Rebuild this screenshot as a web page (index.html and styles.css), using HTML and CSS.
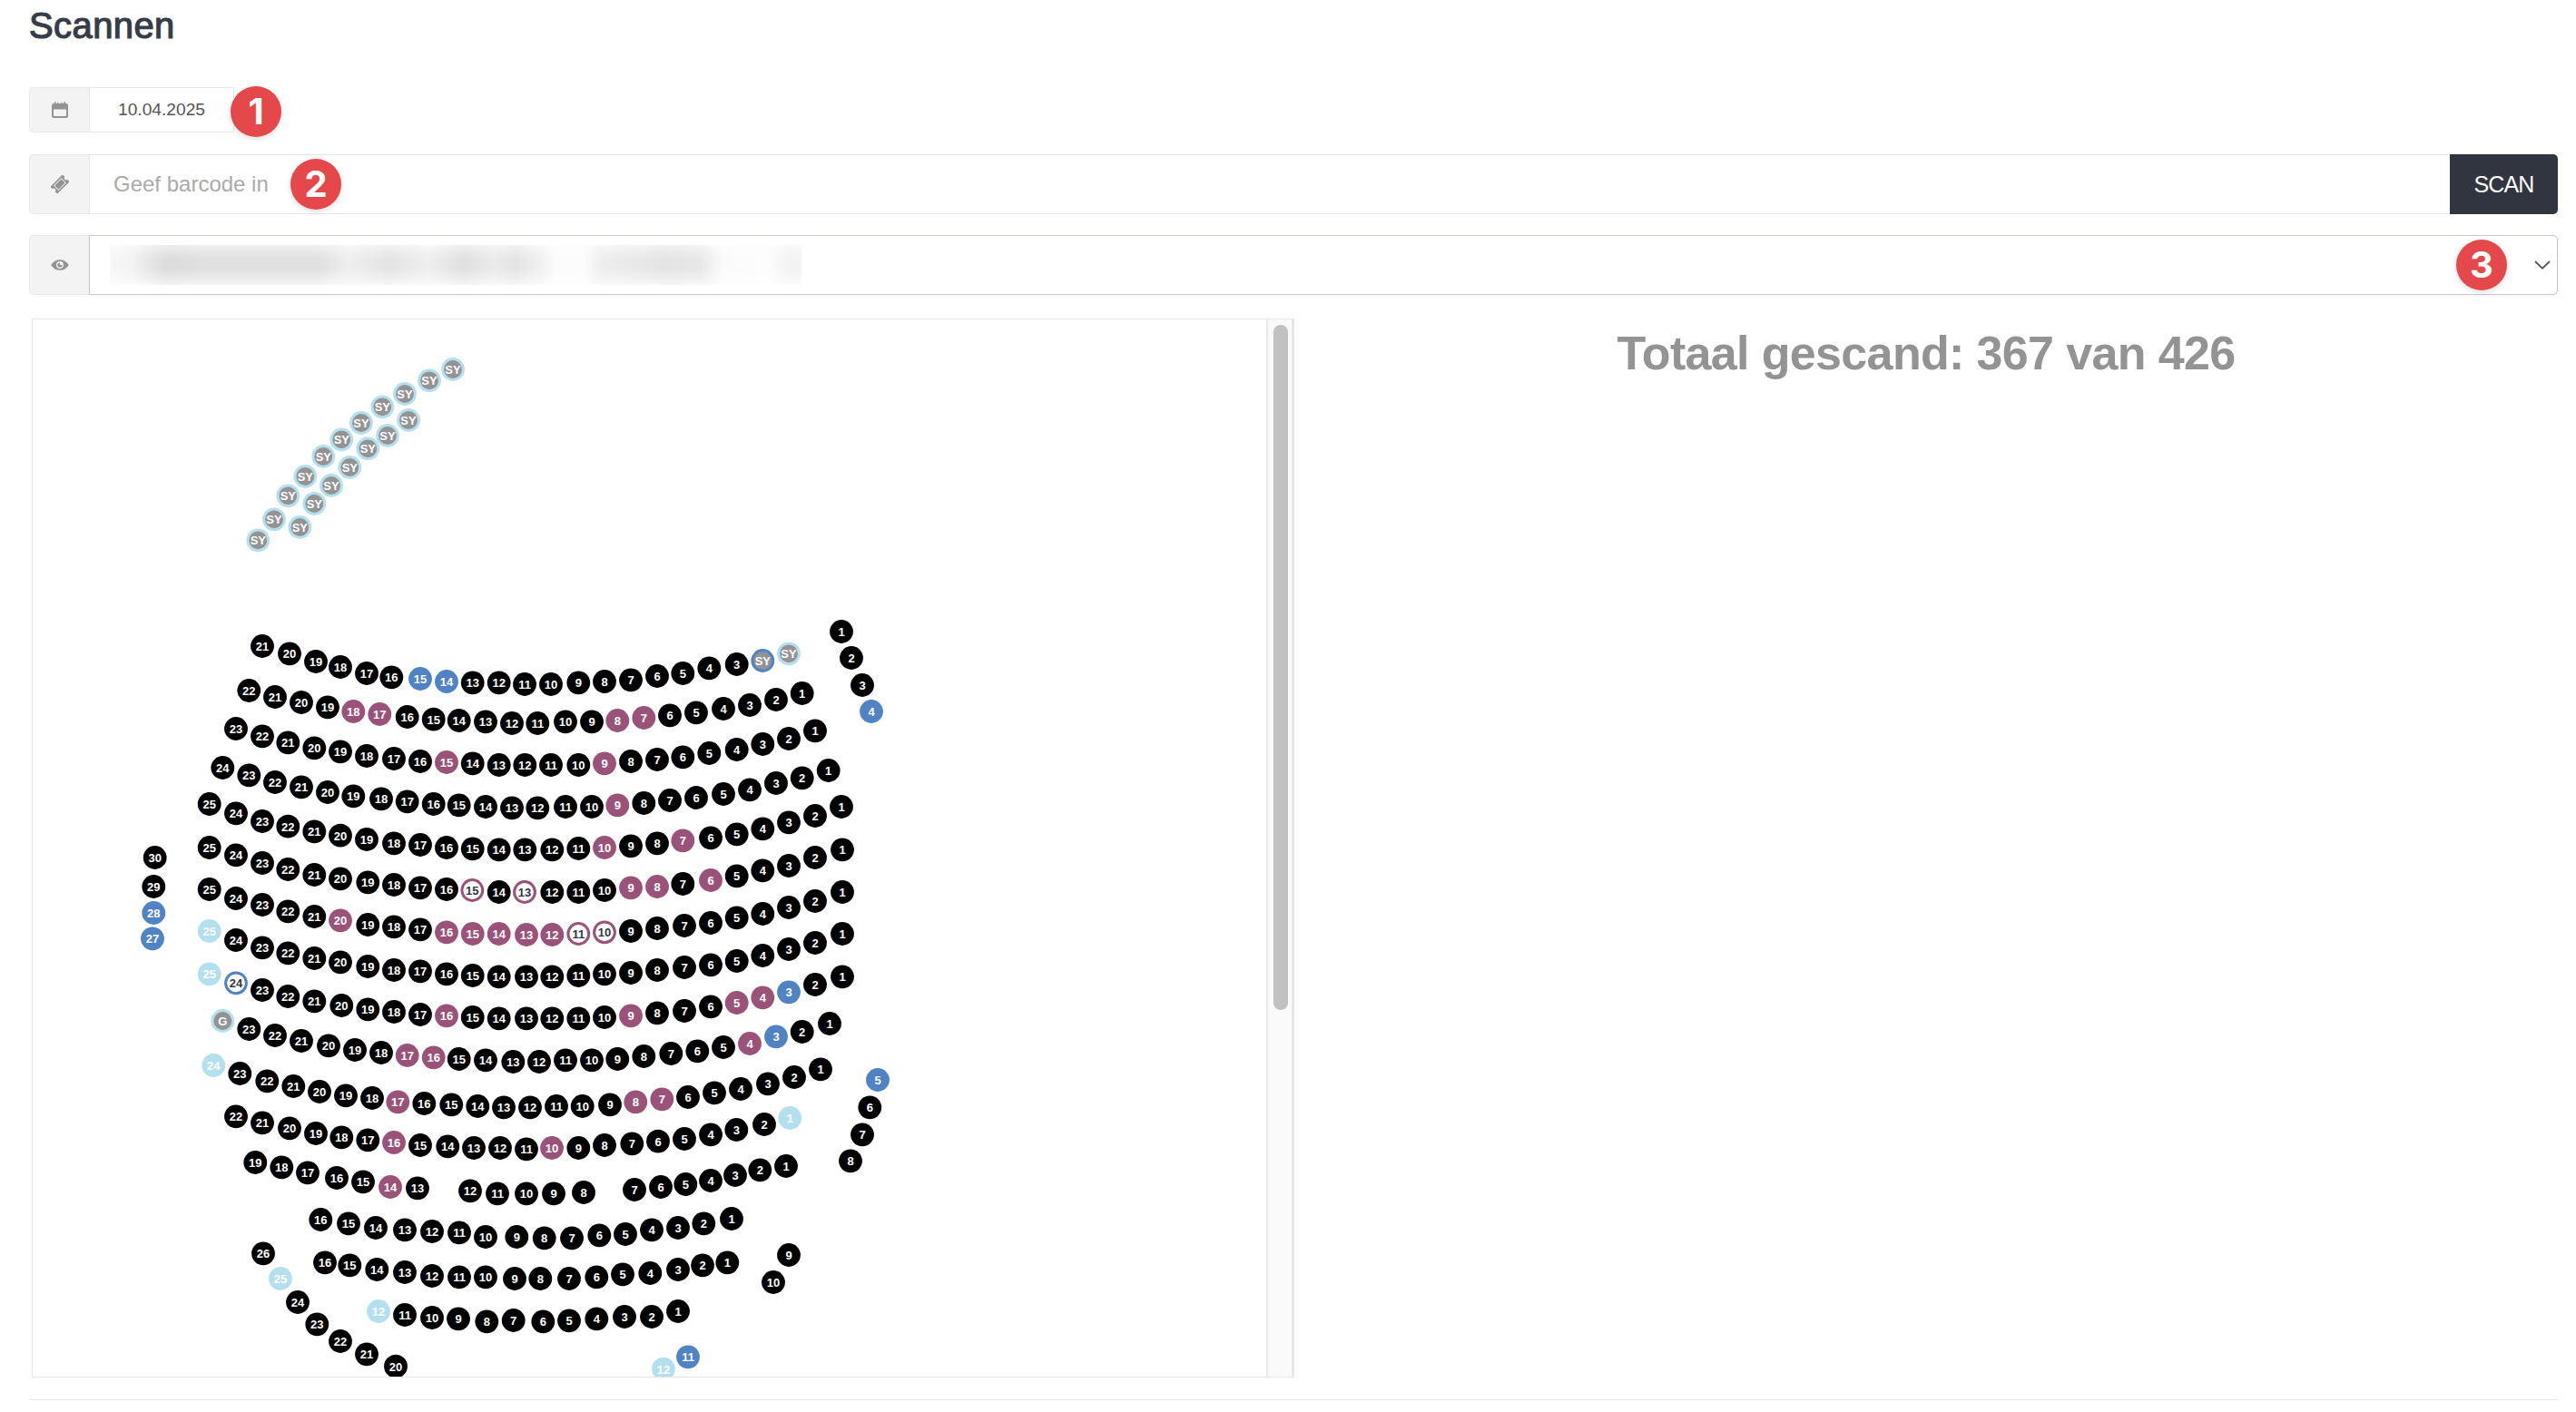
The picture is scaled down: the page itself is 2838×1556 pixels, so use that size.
FILE: index.html
```html
<!DOCTYPE html>
<html lang="nl">
<head>
    <meta charset="UTF-8">
    <meta name="viewport" content="width=device-width, initial-scale=1.0">
    <title>Scannen</title>
    <link rel="stylesheet" href="styles.css">
</head>
<body>
    <div class="page">
        <h1>Scannen</h1>

        <div class="input-group date-group">
            <span class="addon">
                <svg class="icon" viewBox="0 0 20 20">
                    <path fill-rule="evenodd" d="M3 3h1V1.800a.8.800 0 0 1 1.600 0V3h1.800V1.800a.5.500 0 0 1 1 0V3h3.200V1.800a.5.500 0 0 1 1 0V3h1.800V1.800a.8.800 0 0 1 1.600 0V3h1a2 2 0 0 1 2 2v12a2 2 0 0 1-2 2H3a2 2 0 0 1-2-2V5a2 2 0 0 1 2-2zm0 6.500V16q0 1 1 1h12q1 0 1-1V9.500z"/>
                </svg>
            </span>
            <span class="field date-field">10.04.2025</span>
            <span class="step step-1">1</span>
        </div>

        <div class="input-group">
            <span class="addon">
                <svg class="icon" viewBox="0 0 20 20">
                    <g transform="rotate(-45 10 10)">
                        <path fill-rule="evenodd" d="M.5 4.500h19v3.500a2 2 0 0 0 0 4v3.500H.5V12a2 2 0 0 0 0-4zM4 6.200v7.600h12V6.200z"/>
                        <path d="M4.900 7.100h10.200v5.800H4.900z"/>
                    </g>
                </svg>
            </span>
            <input class="field barcode" type="text" placeholder="Geef barcode in">
            <button class="scan-btn">SCAN</button>
            <span class="step step-2">2</span>
        </div>

        <div class="input-group">
            <span class="addon">
                <svg class="icon" viewBox="0 0 20 20">
                    <path fill-rule="evenodd" d="M.2 10C2.500 6 6 4.200 10 4.200S17.500 6 19.800 10C17.500 14 14 15.800 10 15.800S2.500 14 .2 10zM10 6.100a3.900 3.900 0 1 0 0 7.800 3.900 3.900 0 0 0 0-7.800z"/>
                    <path d="M10 7.400a2.600 2.600 0 1 0 2.600 2.600H10z"/>
                </svg>
            </span>
            <div class="field event-select">
                <span class="event-name"></span>
                <svg class="caret" viewBox="0 0 18 10"><path d="M1 1l8 7.700L17 1"/></svg>
            </div>
            <span class="step step-3">3</span>
        </div>

        <div class="content">
            <div class="seat-panel">
                <svg id="seatMap" class="seat-map" viewBox="36 352 1359 1165"></svg>
                <div class="scrollbar"><div class="thumb"></div></div>
            </div>
            <h2>Totaal gescand: 367 van 426</h2>
        </div>
        <hr>
    </div>

    <script src="seats.js"></script>
</body>
</html>
```

FILE: styles.css
```css
* {
    box-sizing: border-box;
}

body {
    margin: 0;
    height: 1556px;
    overflow: hidden;
    background: #fff;
    font-family: "Liberation Sans", Arial, sans-serif;
    color: #363c48;
}

.page {
    padding: 0 20px 0 32px;
}

h1 {
    margin: 0 0 40px;
    height: 56px;
    line-height: 56px;
    font-size: 40px;
    font-weight: normal;
    letter-spacing: 0.4px;
    -webkit-text-stroke: 1.2px #363c48;
}

.input-group {
    position: relative;
    display: flex;
    height: 66px;
    margin-bottom: 23px;
}

.date-group {
    width: 226px;
    height: 50px;
    margin-bottom: 24px;
}

.addon {
    display: flex;
    align-items: center;
    justify-content: center;
    width: 66px;
    background: #f3f3f3;
    border: 1px solid #e8e8e8;
    border-right: none;
    border-radius: 5px 0 0 5px;
}

.icon {
    width: 20px;
    height: 20px;
    fill: #939393;
}

.field {
    flex: 1;
    border: 1px solid #e8e8e8;
    background: #fff;
}

.date-field {
    padding-left: 31px;
    line-height: 48px;
    font-size: 19.2px;
    color: #555;
}

.barcode {
    min-width: 0;
    padding: 0 0 0 26px;
    border-right: none;
    border-radius: 0;
    font-family: inherit;
    font-size: 24px;
}

.barcode::placeholder {
    color: #aaa;
}

.scan-btn {
    width: 119px;
    padding: 0;
    border: none;
    border-radius: 0 5px 5px 0;
    background: #31353f;
    color: #fff;
    font-family: inherit;
    font-size: 25px;
    letter-spacing: -0.9px;
}

.event-select {
    display: flex;
    align-items: center;
    justify-content: space-between;
    padding: 0 7px 0 22px;
    border-color: #c5c9d4;
    border-radius: 0 5px 5px 0;
    box-shadow: 0 2px 4px rgba(0, 0, 0, 0.04);
}

/* event name is hidden behind a smear */
.event-name {
    width: 762px;
    height: 44px;
    background:
        linear-gradient(rgba(255,255,255,0.5), rgba(255,255,255,0) 35%, rgba(255,255,255,0) 60%, rgba(255,255,255,0.65)),
        linear-gradient(to right, #f8f8f8, #f2f2f2 3.4%, #e6e6e6 5.8%, #dcdcdc 8.2%, #e0e0e0 13%, #e0e0e0 30%, #efefef 34.7%, #e4e4e4 40.4%, #efefef 46%, #e0e0e0 51.2%, #ebebeb 55.6%, #e4e4e4 58.8%, #f2f2f2 62.5%, #fcfcfc 64.5%, #fcfcfc 68.5%, #eee 71%, #e4e4e4 80.5%, #e8e8e8 85.4%, #fbfbfb 88.6%, #fdfdfd 95%, #f3f3f3 98.2%, #f3f3f3);
}

.caret {
    width: 18px;
    height: 10px;
    fill: none;
    stroke: #555;
    stroke-width: 1.8;
}

.step {
    position: absolute;
    width: 56px;
    height: 56px;
    border-radius: 50%;
    background: #e5484b;
    box-shadow: 0 2px 6px rgba(0, 0, 0, 0.14);
    color: #fff;
    font-family: Inter, sans-serif;
    font-size: 40px;
    font-weight: bold;
    line-height: 56px;
    text-align: center;
}

.step-1 {
    left: 222px;
    top: -1px;
}

.step-2 {
    left: 288px;
    top: 5px;
}

.step-3 {
    right: 56px;
    top: 5px;
}

.content {
    display: flex;
    margin: 26px 0 24px 3px;
}

.seat-panel {
    display: flex;
    width: 1391px;
    height: 1167px;
    border: 1px solid #e8e8e8;
    border-right-width: 3px;
}

.seat-map {
    width: 1359px;
    height: 1165px;
}

.scrollbar {
    width: 28px;
    padding: 6px 4px 0 6px;
    border-left: 2px solid #e8e8e8;
    background: #fafafa;
}

.thumb {
    width: 16px;
    height: 755px;
    border-radius: 8px;
    background: #c1c1c1;
}

h2 {
    flex: 1;
    margin: 8px 0 0;
    line-height: 60px;
    font-size: 52px;
    letter-spacing: -0.65px;
    text-align: center;
    color: #939393;
}

hr {
    margin: 0;
    border: none;
    border-top: 1px solid #e8e8e8;
}

.seat text {
    font-size: 13px;
    font-weight: bold;
    text-anchor: middle;
    fill: #fff;
}

.seat.blue circle { fill: #4f83c4; }
.seat.purple circle { fill: #9b5278; }
.seat.light circle { fill: #b4dfee; }

.seat.ring-blue circle,
.seat.ring-light circle {
    fill: #939393;
    stroke: #4f83c4;
    stroke-width: 3px;
}

.seat.ring-light circle { stroke: #b4dfee; }

.seat.open-purple circle,
.seat.open-blue circle {
    fill: #fff;
    stroke: #9b5278;
    stroke-width: 3px;
}

.seat.open-blue circle { stroke: #4f83c4; }

.seat.open-purple text,
.seat.open-blue text {
    fill: #333642;
}
```

FILE: seats.js
```js
const states = {
    b: "blue", p: "purple", l: "light",
    B: "ring-blue", L: "ring-light",
    o: "open-purple", q: "open-blue"
};

// every seat is "label[:state] x y"
const rows = [
    // SY places top left
    "SY:L 499 407, SY:L 473 419.3, SY:L 446 434, SY:L 421.3 448.3, SY:L 398 466, SY:L 376.3 484.3, SY:L 356.3 503, SY:L 336.3 525, SY:L 317.3 546.3, SY:L 302 572.3, SY:L 284.3 595.3",
    "SY:L 450 463, SY:L 427 480, SY:L 405.3 494.3, SY:L 385.3 515, SY:L 365 535, SY:L 346.3 555, SY:L 330.3 581",

    // main block, front to back
    "21 289 712, 20 319 720.3, 19 348 729, 18 375 735, 17 404 742, 16 431.3 746.3, 15:b 463 748, 14:b 492 751, 13 520.7 752.3, 12 549.7 752.3, 11 578 754, 10 607 754, 9 637.3 752.3, 8 666 751, 7 695 749.3, 6 724 745, 5 752.3 742, 4 781.3 736.3, 3 811.7 732, SY:B 840.3 728, SY:L 869 720.3",
    "22 274.3 761, 21 303 768, 20 332 774, 19 361 779.3, 18:p 389.3 784, 17:p 418.3 787, 16 448.7 790, 15 477.7 792.7, 14 505.7 794, 13 535 795.3, 12 564 797, 11 592.3 797, 10 623 795.3, 9 652 795.3, 8:p 680.3 794, 7:p 709.3 791, 6 738 788.3, 5 767 785.3, 4 797 781, 3 826 777, 2 855 771, 1 883.7 764",
    "23 260 803, 22 289 811.3, 21 317.3 818.3, 20 346.3 824.3, 19 375 828.3, 18 404 833, 17 434 836, 16 463 839, 15:p 492 840, 14 520.7 841.3, 13 549.7 843, 12 578.3 843, 11 607 843, 10 637.3 843, 9:p 666 841.3, 8 695 839, 7 724 837, 6 752.3 834.3, 5 781.3 830, 4 811.7 826, 3 840.3 820, 2 869 814, 1 898 805.3",
    "24 245.3 846, 23 274.3 854.3, 22 303 862, 21 332 867.3, 20 361 873, 19 389.3 877.3, 18 420 880.3, 17 448.7 883.3, 16 477.7 886, 15 505.7 887.3, 14 535 889, 13 564 890.3, 12 592.3 890.3, 11 623 889, 10 652 889, 9:p 680.3 887.3, 8 709.3 885, 7 738 882, 6 767 879, 5 797 875, 4 826 870.3, 3 855 863, 2 883.7 857.3, 1 912.7 849",
    "25 230.7 886, 24 260 896.3, 23 289 905, 22 317.3 910.7, 21 346.3 916.3, 20 375 920.7, 19 404 925, 18 434 929.3, 17 463 931, 16 492 934, 15 520.7 935.3, 14 549.7 936.3, 13 578.3 936.3, 12 608.3 936.3, 11 637.3 935, 10:p 666 934, 9 695 932.3, 8 724 929.3, 7:p 752.3 926.3, 6 783 923.3, 5 811.7 919.3, 4 840.3 913.3, 3 869 906.3, 2 898 899, 1 927 889",
    "25 230.7 934, 24 260 942.3, 23 289 951, 22 317.3 958, 21 346.3 964, 20 375 968.3, 19 405.3 972.3, 18 434 975, 17 463 978.3, 16 492 980, 15:o 520.3 981, 14 549.7 983, 13:o 578 983, 12 608.3 983, 11 637.3 983, 10 666 981, 9:p 695 978.3, 8:p 724 977, 7 752.3 974, 6:p 783 970, 5 811.7 965.3, 4 840.3 959.3, 3 869 954, 2 898 945, 1 928 936.3",
    "25 230.7 980, 24 260 990, 23 289 997, 22 317.3 1004.3, 21 346.3 1010, 20:p 375 1014.3, 19 405.3 1019, 18 434 1021.3, 17 463 1024.3, 16:p 492 1027.3, 15:p 520.7 1029, 14:p 549.7 1029, 13:p 580 1030, 12:p 608.3 1030, 11:o 637.3 1029, 10:o 666 1027.3, 9 695 1026, 8 724 1023, 7 754 1020, 6 783 1017, 5 811.7 1011.3, 4 840.3 1007, 3 869 1000, 2 898 993, 1 928 983",
    "25:l 230.7 1026, 24 260 1036, 23 289 1044.3, 22 317.3 1050.3, 21 346.3 1056, 20 375 1060.3, 19 405.3 1065, 18 434 1069, 17 463 1070.3, 16 492 1073.3, 15 520.7 1075, 14 549.7 1076.3, 13 580 1076.3, 12 608.3 1076.3, 11 637.3 1075, 10 666 1073.3, 9 695 1072, 8 724 1069, 7 754 1066, 6 783 1063.3, 5 811.7 1059, 4 840.3 1053, 3 869 1046, 2 898 1039, 1 928 1029",
    "25:l 230.7 1073.3, 24:q 260 1083.3, 23 289 1091, 22 317.3 1098, 21 346.3 1103.3, 20 376.3 1108, 19 405.3 1112.3, 18 434 1115, 17 463 1118, 16:p 492 1119.3, 15 520.7 1121, 14 549.7 1122.3, 13 580 1122.3, 12 608.3 1122.3, 11 637.3 1122.3, 10 666 1121, 9:p 695 1119.3, 8 724 1116.3, 7 754 1114, 6 783 1109.3, 5:p 811.7 1105, 4:p 840.3 1099.3, 3:b 869 1093.3, 2 898 1085, 1 928 1076.3",
    "G:L 245.3 1125, 23 274.3 1134, 22 303 1141, 21 332 1147, 20 362 1152.3, 19 391 1157, 18 420 1160, 17:p 448.7 1163, 16:p 477.7 1165.3, 15 505.7 1167, 14 535 1168.3, 13 565.3 1170, 12 594 1170, 11 623 1168.3, 10 652 1168.3, 9 680.3 1167, 8 709.3 1164, 7 739.3 1161, 6 768.3 1158.3, 5 797 1154, 4:p 826 1150, 3:b 855 1142.3, 2 883.7 1137, 1 914 1128",
    "24:l 235.3 1174, 23 264.3 1183, 22 294.3 1191.3, 21 323.3 1197, 20 352 1203, 19 381 1207.3, 18 410 1210, 17:p 438.3 1214.3, 16 467.3 1216, 15 497.3 1217.3, 14 526.3 1219, 13 555 1220.3, 12 584 1220.3, 11 613 1219, 10 641.7 1219, 9 672 1217.3, 8:p 700.3 1214.3, 7:p 729.3 1211.3, 6 758 1209, 5 787 1204.3, 4 816 1200, 3 846 1194.3, 2 875 1187, 1 904 1178.3",
    "22 260 1230.3, 21 289 1237.3, 20 319 1243.3, 19 348 1249, 18 376.3 1253.3, 17 405.3 1256.3, 16:p 434 1259, 15 463 1262, 14 493.3 1263.3, 13 522 1265, 12 551 1265, 11 580 1266.3, 10:p 608 1265, 9 637.3 1265, 8 666 1262, 7 696.3 1260.3, 6 725 1257.7, 5 754 1255, 4 783 1250.3, 3 811.3 1245, 2 842 1239, 1:l 870.3 1232",
    "19 281.3 1281, 18 310.3 1286.3, 17 339 1292.3, 16 371 1298, 15 400 1302.3, 14:p 430 1308, 13 460 1309.3, 12 518 1312.3, 11 548 1315.3, 10 580 1315.3, 9 610 1315.3, 8 643 1314, 7 699 1311, 6 728 1308, 5 755.3 1305, 4 783 1301, 3 810 1295, 2 837.3 1289.3, 1 866 1285",
    "16 353.3 1344, 15 384 1348.3, 14 414 1353, 13 446 1355.3, 12 476 1357, 11 506 1358.3, 10 535 1363, 9 569.3 1363, 8 599.7 1364.3, 7 630 1364.3, 6 660.3 1361.3, 5 689 1360, 4 718 1355.3, 3 747 1353, 2 775.3 1348.3, 1 806 1343",
    "16 358 1391.3, 15 385.3 1394.3, 14 415.3 1399, 13 446 1402, 12 476 1406, 11 506 1407.3, 10 535 1407.3, 9 567 1409, 8 595.3 1409, 7 627 1409, 6 657.3 1407.3, 5 686 1404.3, 4 716.3 1403, 3 747 1399, 2 774 1394.3, 1 801.3 1391.3",
    "12:l 417 1445, 11 446 1449, 10 476 1452, 9 505 1453.3, 8 536.3 1456.3, 7 565.7 1455, 6 598.3 1456.3, 5 627 1455.3, 4 657.3 1453.3, 3 688 1451, 2 718 1451, 1 747 1445",

    // side seats
    "30 170.7 945, 29 169.3 977, 28:b 169.3 1006, 27:b 168 1034.3",
    "26 290 1381.3, 25:l 309 1409, 24 328 1435, 23 349.3 1459.3, 22 375 1478, 21 404 1492.3, 20 436 1505.7",
    "1 927 696, 2 938 725, 3 950 755, 4:b 960 784",
    "5:b 967 1190, 6 958.3 1220.3, 7 950 1250.3, 8 937 1279.3, 9 869 1383, 10 852 1413, 11:b 758 1495.3, 12:l 731 1508.7"
];

let seats = "";
rows.forEach(row => {
    row.split(", ").forEach(seat => {
        const [name, x, y] = seat.split(" ");
        const [label, state] = name.split(":");
        const ring = state && "BLoq".includes(state);
        seats += `<g class="seat ${states[state] || ""}" transform="translate(${x} ${y})"><circle r="${ring ? 11.4 : 12.9}"/><text y="5">${label}</text></g>`;
    });
});
document.getElementById("seatMap").innerHTML = seats;
```
